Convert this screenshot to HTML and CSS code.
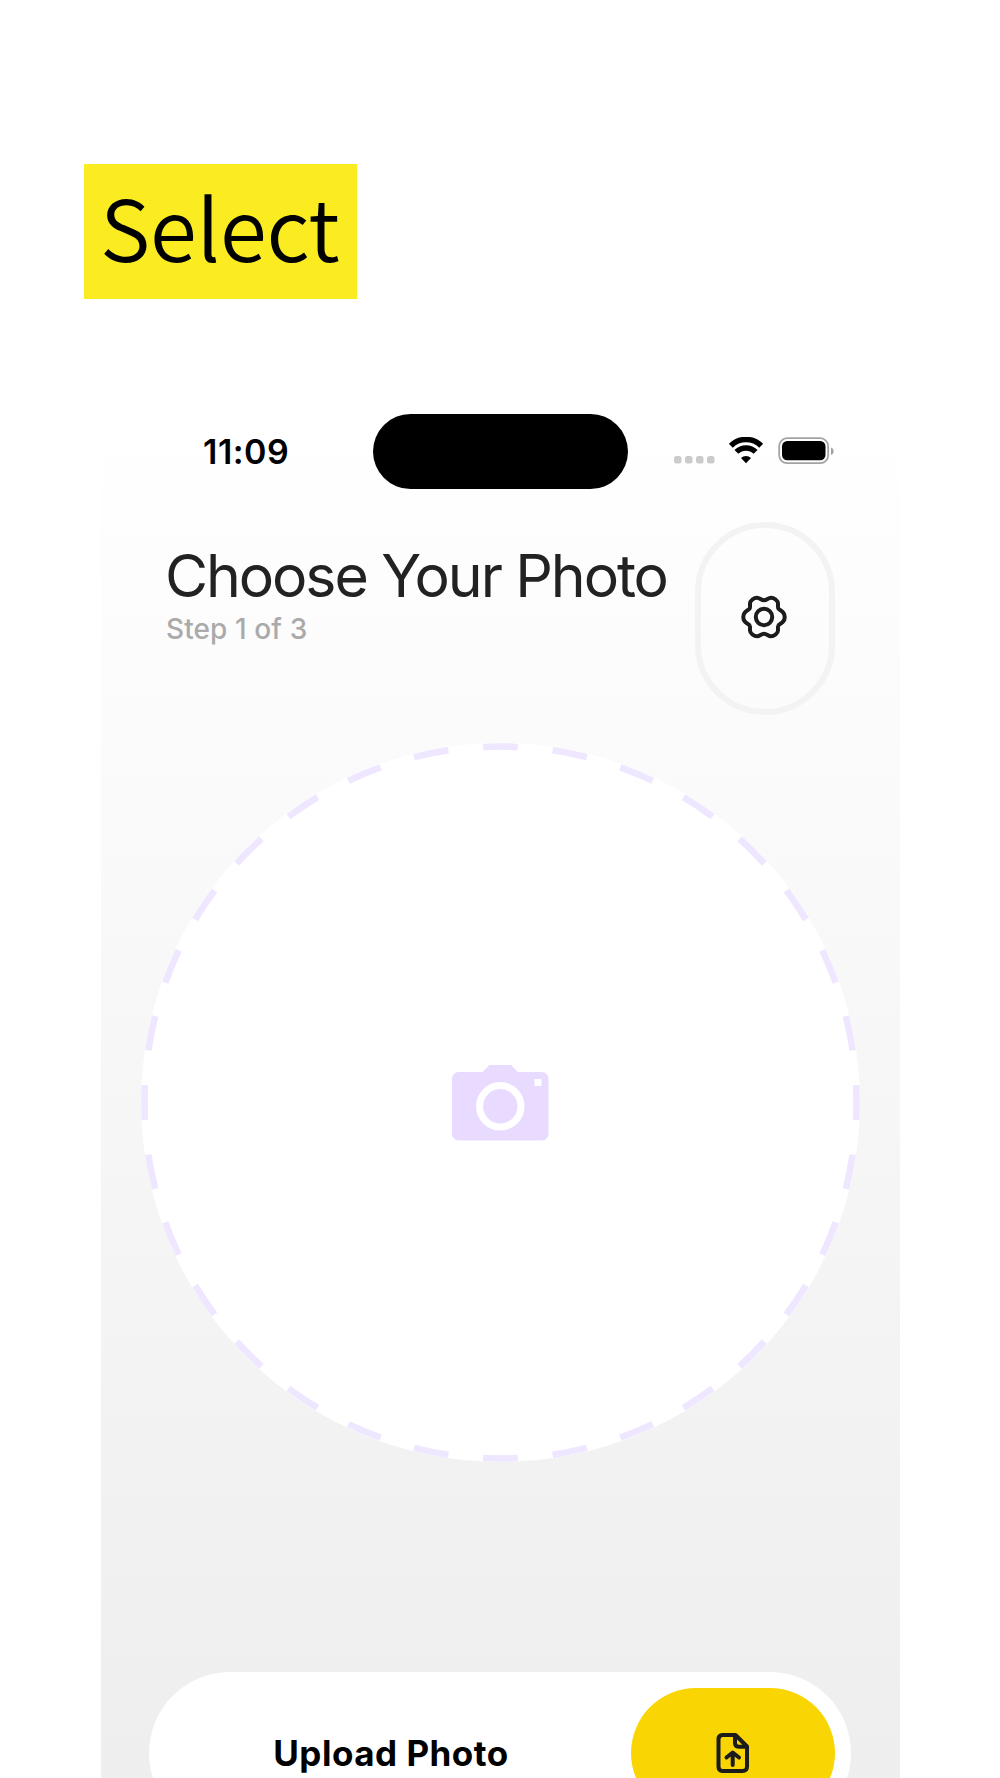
FILE: index.html
```html
<!DOCTYPE html>
<html lang="en">
<head>
	<meta charset="UTF-8">
	<title>Choose Your Photo</title>
	<link rel="stylesheet" href="styles.css">
</head>
<body>
	<h1 class="caption">Select</h1>
	<div class="phone">
		<div class="status">
			<span class="time">11:09</span>
			<div class="island"></div>
			<svg class="signal" width="164" height="30" viewBox="0 0 164 30">
				<g fill="#cbcbcb">
					<rect x="4" y="19" width="7.5" height="7.5" rx="2.5"/>
					<rect x="15" y="19" width="7.5" height="7.5" rx="2.5"/>
					<rect x="26" y="19" width="7.5" height="7.5" rx="2.5"/>
					<rect x="37" y="19" width="7.5" height="7.5" rx="2.5"/>
				</g>
				<g fill="none" stroke="#000" stroke-width="5.5">
					<path d="M60.8 8.7a21.6 21.6 0 0 1 30.4 0"/>
					<path d="M66.4 14.9a13.6 13.6 0 0 1 19.2 0"/>
				</g>
				<path d="M76 26.3l-5-5.2a7.2 7.2 0 0 1 10 0z"/>
				<rect x="109.2" y="1.2" width="49" height="25" rx="8" fill="none" stroke="#a3a3a3" stroke-width="1.8"/>
				<rect x="112" y="4" width="43.5" height="19.3" rx="5.2"/>
				<path d="M161 10.5c3.500 1 3.500 6.500 0 7.500z" fill="#a3a3a3"/>
			</svg>
		</div>
		<div class="header">
			<div class="heading">
				<h2>Choose Your Photo</h2>
				<p>Step 1 of 3</p>
			</div>
			<div class="settings">
				<svg width="50" height="50" viewBox="-25 -25 50 50" fill="none" stroke="#1c1c1c" stroke-width="4" stroke-linejoin="round">
					<path d="M0 -16.8C3 -16.8 4 -19.300 7 -19.300C10 -19.300 13.900 -16.500 14 -13.500C14.100 -11 13.500 -9.500 14.600 -8.200C16.300 -6.300 20.700 -6 20.700 0C20.700 6 16.300 6.300 14.600 8.200C13.500 9.500 14.100 11 14 13.500C13.900 16.500 10 19.300 7 19.300C4 19.300 3 16.800 0 16.800C-3 16.800 -4 19.300 -7 19.300C-10 19.300 -13.900 16.500 -14 13.500C-14.100 11 -13.500 9.500 -14.600 8.200C-16.300 6.300 -20.700 6 -20.700 0C-20.700 -6 -16.300 -6.300 -14.600 -8.200C-13.500 -9.500 -14.100 -11 -14 -13.500C-13.900 -16.500 -10 -19.300 -7 -19.300C-4 -19.300 -3 -16.800 0 -16.800Z"/>
					<circle r="8.200"/>
				</svg>
			</div>
		</div>
		<!--32 dashes, pathLength makes each one 1 on 1 off-->
		<svg class="picker" width="719" height="719" viewBox="-359.500 -359.500 719 719">
			<circle r="359.500" fill="#fff"/>
			<circle class="dashes" r="356" pathLength="64"/>
			<g transform="translate(-0.500 -0.500)">
				<path fill="#e8dbff" d="M-41.500 -30H-17.500L-10.500 -37H11L18 -30H42A6.500 6.500 0 0 1 48.500 -23.500V32A6.500 6.500 0 0 1 42 38.500H-41.500A6.500 6.500 0 0 1 -48 32V-23.500A6.500 6.500 0 0 1 -41.500 -30Z"/>
				<circle cx="0.300" cy="4.300" r="20.700" fill="none" stroke="#fff" stroke-width="7"/>
				<rect x="34.500" y="-23" width="7" height="7" fill="#fff"/>
			</g>
		</svg>
		<div class="upload">
			<span>Upload Photo</span>
			<div class="go">
				<svg width="36" height="44" viewBox="0 0 36 44" fill="none" stroke="#1c1c1c" stroke-width="4" stroke-linecap="round" stroke-linejoin="round">
					<path d="M7 4H20.500L32 15.500V35.500Q32 40 27.500 40H7.500Q3.500 40 3.500 35.500V8.500Q3.500 4 7.500 4"/>
					<path d="M20 4.500V12Q20 15.700 23.700 15.700H31.500"/>
					<path d="M17.700 34V22M11.500 26.500L17.700 21.500L24 26.500"/>
				</svg>
			</div>
		</div>
	</div>
</body>
</html>
```

FILE: styles.css
```css
*{
	margin: 0;
	padding: 0;
	box-sizing: border-box;
}
body{
	width: 1000px;
	height: 1778px;
	padding: 164px 100px 0 101px;
	background: #fff;
	overflow: hidden;
	font-family: Inter, "Liberation Sans", sans-serif;
}
svg{
	display: block;
	flex: none;
}
.caption{
	width: 273px;
	height: 135px;
	margin-left: -17px;
	padding-left: 16px;
	background: #fbec22;
	color: #000;
	font: 350 85px/121px "Noto Sans CJK SC", sans-serif;
	letter-spacing: -0.2px;
	white-space: nowrap;
}
.phone{
	height: 1364px;
	margin-top: 115px;
	background: linear-gradient(#fff, #eee);
	overflow: hidden;
}
.status{
	display: flex;
	height: 75px;
	align-items: center;
}
.time{
	width: 272px;
	padding-left: 102px;
	font-size: 34px;
	font-weight: 600;
	line-height: 40px;
	letter-spacing: 0.5px;
}
.island{
	width: 255px;
	height: 75px;
	border-radius: 38px;
	background: #000;
}
.signal{
	margin-left: 42px;
}
.header{
	display: flex;
	justify-content: space-between;
	margin-top: 33px;
	padding: 0 65px 0 64px;
}
.heading{
	padding-top: 17px;
	white-space: nowrap;
}
.heading h2{
	color: #222;
	font-size: 59px;
	font-weight: 400;
	line-height: 73px;
	letter-spacing: -2.1px;
}
.heading p{
	padding-left: 1px;
	color: #aaa;
	font-size: 28px;
	font-weight: 500;
	line-height: 34px;
	letter-spacing: 0.1px;
}
.settings{
	display: flex;
	flex: none;
	width: 140px;
	height: 193px;
	padding: 0 2px 3px 0;
	align-items: center;
	justify-content: center;
	border: 6px solid #f3f3f3;
	border-radius: 70px;
}
.picker{
	margin: 28px auto 0 40px;
}
.dashes{
	fill: none;
	stroke: #efe6ff;
	stroke-width: 6.6;
	stroke-dasharray: 1 1;
	stroke-dashoffset: 0.5;
}
.upload{
	display: flex;
	width: 702px;
	height: 162px;
	margin: 210px 0 0 48px;
	padding: 16px;
	align-items: center;
	border-radius: 81px;
	background: #fff;
}
.upload span{
	flex: 1;
	padding-right: 14px;
	color: #000;
	font-size: 35px;
	font-weight: 700;
	letter-spacing: 0.5px;
	text-align: center;
}
.go{
	display: flex;
	width: 204px;
	height: 130px;
	align-items: center;
	justify-content: center;
	border-radius: 65px;
	background: #fad504;
}
```
